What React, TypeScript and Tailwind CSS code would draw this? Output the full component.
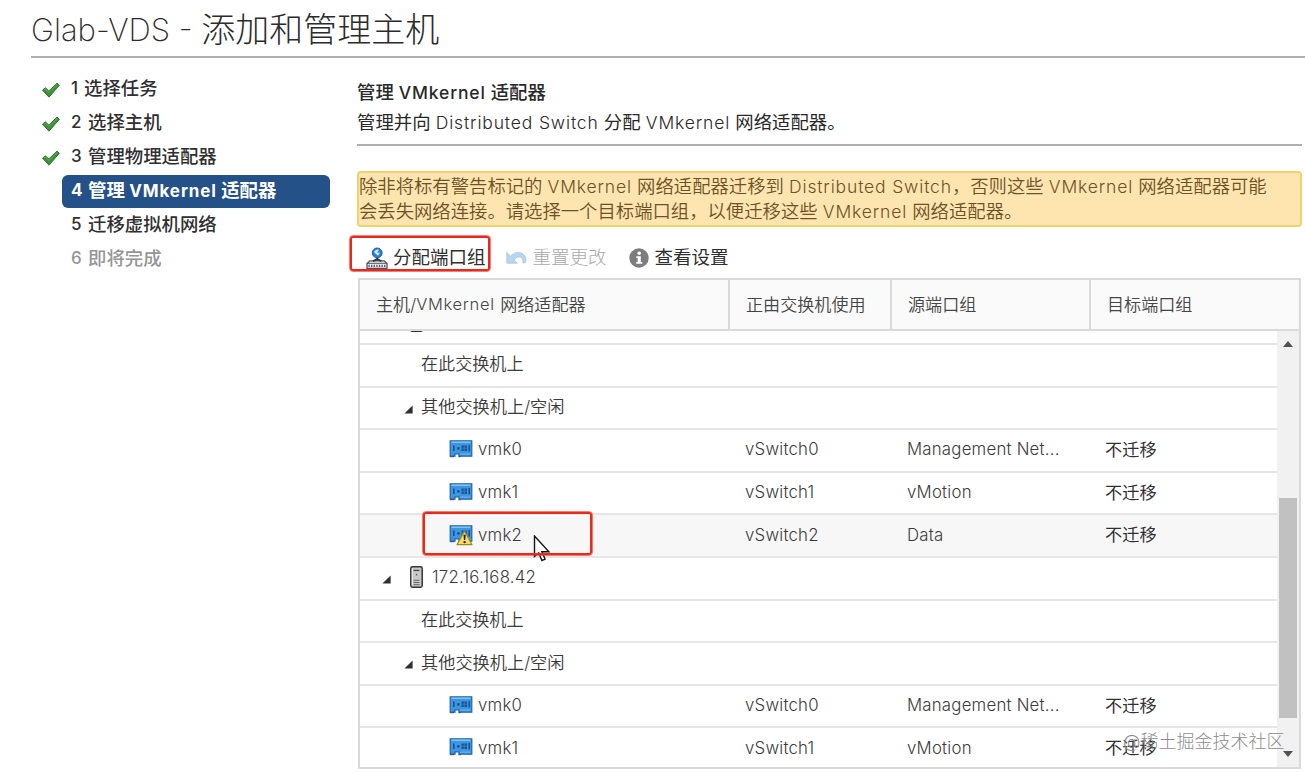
import type { ReactNode } from "react";

const sans = "font-['Inter','Noto_Sans_CJK_SC',sans-serif]";

/* Latin run inside Chinese copy */
function L({ children, c = "" }: { children: ReactNode; c?: string }) {
  return <span className={`whitespace-pre ${c}`}>{children}</span>;
}

function Check() {
  return (
    <svg width="20" height="18" viewBox="0 0 20 18" className="mt-[1px] shrink-0">
      <path d="M1.5 9.2 4.3 6.8 7.8 10 16 2.2 18.3 4.3 8 16.2Z" fill="#3f8f38" stroke="#2f7a2c" strokeWidth="1" strokeLinejoin="round" />
      <path d="M3.2 9 4.3 8 7.8 11.6 16 3.6" fill="none" stroke="#63ac57" strokeWidth="1" />
    </svg>
  );
}

function Assign() {
  return (
    <svg width="22" height="22" viewBox="0 0 22 22">
      <path d="M4 13.800h14l3 2.700v5H1v-5Z" fill="#eef1f3" stroke="#4a565f" strokeWidth="1.300" strokeLinejoin="round" />
      <path d="M1 16.300h20" stroke="#4a565f" strokeWidth="1" />
      <path d="M2.500 18.800h17.500" stroke="#4a565f" strokeWidth="2.200" strokeDasharray="1.300 1.300" />
      <path d="M11.200 10v3.500M7 14.300l4.200-2.300 4.200 2.300" stroke="#26343f" strokeWidth="1.800" fill="none" />
      <circle cx="11.200" cy="5.900" r="4.900" fill="#2f7fd3" stroke="#1b5ba8" strokeWidth="1" />
      <path d="M8 5.200C9 2.800 11.500 2 13 3l-2 2.500 3 .2-2 3-2.200-2Z" fill="#d3eafc" />
    </svg>
  );
}

function Undo() {
  return (
    <svg width="21" height="15" viewBox="0 0 21 15">
      <path d="M.800 2.500v10.700h10.700L8.200 10c1.300-2.300 3.400-3.500 5.800-3 2.300.600 3.400 2.700 2.800 5.800h2.700c1.100-4.400-.4-8-3.600-9.600C12 1.500 8 2.600 4.600 6.200Z" fill="#b9d6ec" stroke="#9cc0dc" strokeWidth=".7" strokeLinejoin="round" />
    </svg>
  );
}

function Info() {
  return (
    <svg width="20" height="20" viewBox="0 0 20 20">
      <circle cx="10" cy="10" r="9.700" fill="#7d7d7d" />
      <circle cx="10.200" cy="5.300" r="1.800" fill="#fff" />
      <path d="M7.300 8.200h4.500v5.800h1.500v1.800H7.200V14h1.500v-4H7.300Z" fill="#fff" />
    </svg>
  );
}

function Nic({ warn }: { warn?: boolean }) {
  return (
    <svg width="24" height="22" viewBox="0 0 24 22" className="shrink-0">
      <path d="M1.200 1.800h21.600v15.400H10v-2.400H6v2.400H1.200Z" fill="#3b97e3" stroke="#2464a4" strokeWidth="1.200" />
      <path d="M2.500 3.200h19" stroke="#83c4f5" strokeWidth="1.500" />
      <path d="M1 17.700h4M9.500 17.700H12" stroke="#1e548c" strokeWidth="1" />
      <path d="M4.800 6.500v5.500M20.200 6v6.500" stroke="#174f8c" strokeWidth="1.500" />
      <path d="M8.300 8.300h2.200v2.200H8.300Z" fill="#153f70" />
      <path d="M12.500 6.500H18v5.500h-5.500Z" fill="#1d548f" />
      <path d="M12.500 9.200H18M15.200 6.500v5.500" stroke="#3f8ad0" strokeWidth=".7" />
      <path d="M11 15.200h10.500" stroke="#69b3ed" strokeWidth="1.200" />
      {warn && (
        <>
          <path d="M15.500 7 23 20.700H8Z" fill="#f8dc62" stroke="#a38527" strokeWidth="1.200" strokeLinejoin="round" />
          <path d="M14.500 10.800h2.200l-.5 5.200h-1.200Z" fill="#222" />
          <circle cx="15.600" cy="18.100" r="1.200" fill="#222" />
        </>
      )}
    </svg>
  );
}

function Server() {
  return (
    <svg width="13" height="22" viewBox="0 0 13 22" className="shrink-0">
      <rect x=".8" y=".8" width="11.400" height="20.400" rx="1.600" fill="#c9c9c9" stroke="#353535" strokeWidth="1.500" />
      <path d="M2.300 2.500v16.500" stroke="#f2f2f2" strokeWidth="1" />
      <path d="M3.500 4.400h6" stroke="#444" strokeWidth="1.300" />
      <circle cx="6.500" cy="8.800" r=".8" fill="#444" />
      <path d="M3.500 14.300h6M3.500 16.500h6M3.500 18.700h6" stroke="#666" strokeWidth="1" />
    </svg>
  );
}

function Caret() {
  return (
    <svg width="9" height="9" viewBox="0 0 9 9" className="shrink-0">
      <path d="M8.600.4v8.200H.4Z" fill="#303030" />
    </svg>
  );
}

const cell = "text-[16.8px] font-light tracking-[0.22px] text-[#3c3c3c]";
const lat = "text-[17.5px] font-light tracking-[0.85px]";

function Row({ children, className = "" }: { children: ReactNode; className?: string }) {
  return (
    <div className={`flex h-[42.600px] w-[917px] shrink-0 items-center border-b-2 border-[#e6e6e6] pb-[1px] ${className}`}>
      {children}
    </div>
  );
}

function Host({ ip, className }: { ip?: string; className?: string }) {
  return (
    <Row className={className}>
      <div className="flex items-center pb-[2px] pl-[22px]">
        <span className="pt-[5px]"><Caret /></span>
        <span className="ml-[19px]"><Server /></span>
        {ip && <span className={`ml-[9px] pt-[2px] ${cell}`}>{ip}</span>}
      </div>
    </Row>
  );
}

function Nearby() {
  return (
    <>
      <Row>
        <span className="pb-[1px] pl-[61px] text-[17.1px] text-[#3a3a3a] font-[350]">在此交换机上</span>
      </Row>
      <Row>
        <span className="pl-[44px] pt-[4px]"><Caret /></span>
        <span className="ml-[8px] pb-[1px] text-[17.200px] text-[#3a3a3a] font-[350]">其他交换机上/空闲</span>
      </Row>
    </>
  );
}

function Adapter({ name, sw, group, warn }: { name: string; sw: string; group: string; warn?: boolean }) {
  return (
    <Row className={warn ? "bg-[#f7f7f7]" : ""}>
      <div className="flex w-[385px] items-center pl-[89px]">
        <Nic warn={warn} />
        <span className={`ml-[5px] ${cell}`}>{name}</span>
      </div>
      <div className={`w-[162px] ${cell}`}>{sw}</div>
      <div className={`w-[198px] ${cell}`}>{group}</div>
      <div className="text-[17.200px] text-[#303030]">不迁移</div>
    </Row>
  );
}

function Step({ n, children, state }: { n: number; children: ReactNode; state: "done" | "active" | "next" | "off" }) {
  const look =
    state === "active"
      ? "bg-[#235188] text-white font-bold rounded-[6px]"
      : state === "off"
        ? "text-[#959595] font-medium"
        : "text-[#303030] font-medium";
  return (
    <div className="flex h-[34px] items-center">
      <div className="w-[21px] shrink-0">{state === "done" && <Check />}</div>
      <div className={`flex h-[33px] w-[268px] items-center pl-[9px] text-[18.400px] ${look}`}>
        <span className={n === 1 ? "w-[13px] text-[17px]" : "w-[17px] text-[17px]"}>{n}</span>
        <span>{children}</span>
      </div>
    </div>
  );
}

export default function App() {
  return (
    <div className={`relative flex h-[773px] w-[1305px] flex-col overflow-hidden bg-white ${sans}`}>
      <header className="ml-[31px] flex h-[58px] shrink-0 items-center border-b-2 border-[#b0b0b0] pt-[4px] text-[34px] leading-[50px] font-light text-[#2c2c2c]">
        <L c="text-[31px] font-extralight">Glab-VDS - </L>
        <span>添加和管理主机</span>
      </header>

      <div className="flex flex-1">
        <nav className="w-[357px] shrink-0 pl-[41px] pt-[14px]">
          <Step n={1} state="done">选择任务</Step>
          <Step n={2} state="done">选择主机</Step>
          <Step n={3} state="done">管理物理适配器</Step>
          <Step n={4} state="active">管理 <L c="text-[17px] tracking-[0.9px]">VMkernel</L> 适配器</Step>
          <Step n={5} state="next">迁移虚拟机网络</Step>
          <Step n={6} state="off">即将完成</Step>
        </nav>

        <main className="w-[945px] shrink-0">
          <div className="flex h-[88px] flex-col border-b-2 border-[#b0b0b0] pt-[19px] text-[18.400px] leading-[30px] text-[#292929]">
            <div className="font-medium">管理 <L c="text-[17.500px] tracking-[0.85px]">VMkernel</L> 适配器</div>
            <div className="-mt-[1px]">
              管理并向 <L c={lat}>Distributed Switch</L> 分配 <L c={lat}>VMkernel</L> 网络适配器。
            </div>
          </div>

          <div className="mt-[25px] h-[56px] rounded-[4px] border-2 border-[#ecd46e] bg-[#fee5b0] pt-[1px] text-[18.350px] leading-[25px] text-[#6c5226] font-[350]">
            <div className="whitespace-nowrap">
              除非将标有警告标记的 <L c={lat}>VMkernel</L> 网络适配器迁移到 <L c={lat}>Distributed Switch</L>，否则这些 <L c={lat}>VMkernel</L> 网络适配器可能
            </div>
            <div className="whitespace-nowrap">
              会丢失网络连接。请选择一个目标端口组，以便迁移这些 <L c={lat}>VMkernel</L> 网络适配器。
            </div>
          </div>

          <div className="flex h-[51px] items-center pt-[10px] text-[18.500px] text-[#2f2f2f]">
            <div className="flex items-center pl-[9px]">
              <Assign />
              <span className="ml-[5px]">分配端口组</span>
            </div>
            <div className="ml-[20px] flex items-center text-[#aaaaaa] font-light">
              <Undo />
              <span className="ml-[6px]">重置更改</span>
            </div>
            <div className="ml-[22px] flex items-center">
              <Info />
              <span className="ml-[6px]">查看设置</span>
            </div>
          </div>

          <section className="ml-[1px] flex h-[491px] w-[943px] flex-col border-2 border-[#dadada]">
            <div className="flex h-[51px] shrink-0 items-center border-b-2 border-[#dadada] bg-[#fafafa] text-[17.100px] text-[#454545] font-[350]">
              <div className="flex h-full w-[370px] items-center border-r-2 border-[#d9d9d9] pl-[16px]">
                主机/<L c="text-[16.500px] font-light tracking-[0.7px]">VMkernel </L>网络适配器
              </div>
              <div className="flex h-full w-[162px] items-center border-r-2 border-[#d9d9d9] pl-[16px]">正由交换机使用</div>
              <div className="flex h-full w-[199px] items-center border-r-2 border-[#d9d9d9] pl-[16px]">源端口组</div>
              <div className="pl-[16px]">目标端口组</div>
            </div>
            <div className="flex flex-1 overflow-hidden">
              <div className="flex h-[436px] w-[917px] flex-col overflow-hidden">
                <Host className="-mt-[28.600px]" />
                <Nearby />
                <Adapter name="vmk0" sw="vSwitch0" group="Management Net..." />
                <Adapter name="vmk1" sw="vSwitch1" group="vMotion" />
                <Adapter name="vmk2" sw="vSwitch2" group="Data" warn />
                <Host ip="172.16.168.42" />
                <Nearby />
                <Adapter name="vmk0" sw="vSwitch0" group="Management Net..." />
                <Adapter name="vmk1" sw="vSwitch1" group="vMotion" />
              </div>
              <div className="flex w-[22px] flex-col items-center bg-[#f1f1f1] pt-[10px]">
                <svg width="10" height="6" viewBox="0 0 10 6"><path d="M0 6 5 0l5 6Z" fill="#505050" /></svg>
                <div className="mt-[151px] h-[220px] w-[18px] bg-[#c1c1c1]" />
                <svg className="mt-[33px]" width="10" height="6" viewBox="0 0 10 6"><path d="M0 0h10L5 6Z" fill="#505050" /></svg>
              </div>
            </div>
          </section>
        </main>
      </div>

      <svg className="absolute left-[533px] top-[535px]" width="18" height="28" viewBox="0 0 18 28">
        <path d="M1.500 1v20.500l4.200-3.700 3.200 7.700 3.200-1.400-3.200-7.300h7Z" fill="#fff" stroke="#151515" strokeWidth="1.400" />
      </svg>
      <div className="absolute left-[350px] top-[236px] h-[35px] w-[140px] rounded-[3px] border-[2.500px] border-[#e8291c] outline-[0.5px] outline-[#e8291c]/60" />
      <div className="absolute left-[423px] top-[512px] h-[43px] w-[169px] rounded-[3px] border-[2.500px] border-[#e8291c] outline-[0.5px] outline-[#e8291c]/60" />
      <div className="absolute left-[1123px] top-[729px] whitespace-nowrap text-[18px] leading-[26px] text-[#8d8d8d] font-light">
        @稀土掘金技术社区
      </div>
    </div>
  );
}
